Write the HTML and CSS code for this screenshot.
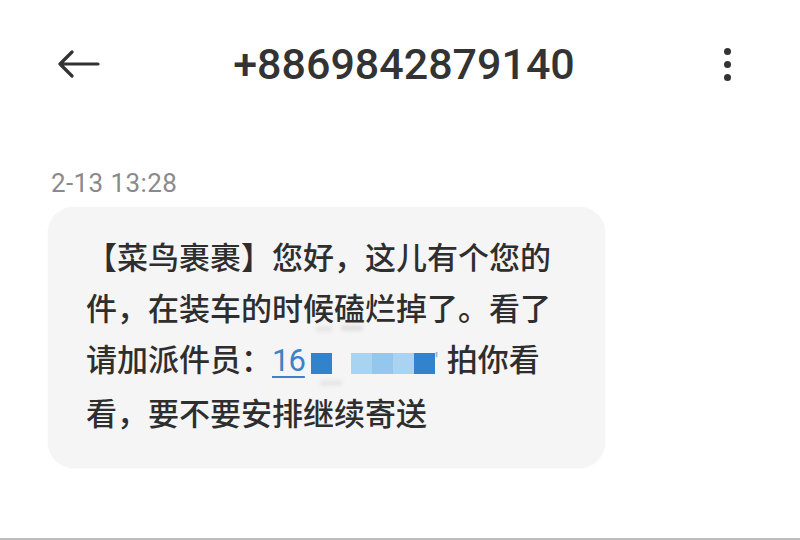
FILE: index.html
```html
<!DOCTYPE html>
<html lang="zh-CN">
<head>
    <meta charset="UTF-8">
    <meta name="viewport" content="width=device-width, initial-scale=1.0">
    <title>+8869842879140</title>
    <link rel="stylesheet" href="styles.css">
</head>
<body>
    <div class="screen">
        <header class="top-bar">
            <div class="back">
                <svg width="44" height="28" viewBox="0 0 44 28">
                    <path d="M3 14 H41 M15 2 L3 14 L15 26" fill="none" stroke="#333" stroke-width="3.2" stroke-linecap="round" stroke-linejoin="round"/>
                </svg>
            </div>
            <h1 class="number">+8869842879140</h1>
            <div class="more">
                <span class="dot"></span>
                <span class="dot"></span>
                <span class="dot"></span>
            </div>
        </header>

        <div class="thread">
            <div class="time">2-13 13:28</div>
            <div class="bubble">
                <p class="msg">【菜鸟裹裹】您好，这儿有个您的<br>件，在装车的时候磕烂掉了。看了<br>请加派件员：<a class="phone" href="#">16</a><span class="mosaic"><span class="blk dark"></span><span class="blk gap"></span><span class="blk light"></span><span class="blk lighter"></span><span class="blk light"></span><span class="blk dark"></span><span class="tick">'</span></span>拍你看<br>看，要不要安排继续寄送</p>
                <span class="smudge s1"></span>
                <span class="smudge s2"></span>
                <span class="smudge s3"></span>
            </div>
        </div>

        <div class="bottom-line"></div>
    </div>
</body>
</html>
```

FILE: styles.css
```css
body {
    margin: 0;
    background-color: #ffffff;
    font-family: Roboto, "Noto Sans CJK SC", sans-serif;
}
.screen {
    height: 540px;
    display: flex;
    flex-direction: column;
}

.top-bar {
    height: 128px;
    display: grid;
    grid-template-columns: 1fr auto 1fr;
    align-items: center;
    padding: 0 57px;
}
.top-bar .back {
    display: flex;
    align-items: center;
}
.top-bar .number {
    margin: 0;
    padding-left: 8px;
    font-family: Roboto, sans-serif;
    font-size: 43px;
    font-weight: 500;
    color: #333333;
}
.top-bar .more {
    justify-self: end;
    display: flex;
    flex-direction: column;
    gap: 6px;
    padding-right: 12px;
}
.top-bar .dot {
    width: 7px;
    height: 7px;
    border-radius: 50%;
    background-color: #333333;
}

.thread {
    padding: 0 48px;
    margin-top: 40px;
}
.thread .time {
    font-family: Roboto, sans-serif;
    font-size: 26px;
    line-height: 31px;
    letter-spacing: 0.4px;
    color: #8a8a8a;
    padding-left: 3px;
}
.bubble {
    position: relative;
    width: 557px;
    box-sizing: border-box;
    margin-top: 8px;
    padding: 23px 30px 31px 38px;
    background-color: #f5f5f5;
    border-radius: 26px;
    box-shadow: 0 0 2px rgba(0, 0, 0, 0.06);
}
.bubble .msg {
    margin: 0;
    font-family: "Noto Sans CJK SC", sans-serif;
    font-size: 31px;
    font-weight: 500;
    line-height: 51px;
    color: #2e2e2e;
    white-space: nowrap;
}
.bubble .phone {
    font-family: Roboto, sans-serif;
    color: #3b82c8;
    text-decoration: underline;
    text-decoration-thickness: 2px;
    text-underline-offset: 5px;
    font-weight: 400;
    letter-spacing: -1px;
}
.bubble .mosaic {
    display: inline-flex;
    align-items: center;
    vertical-align: -3px;
    height: 22px;
    margin-left: 6px;
}
.mosaic .blk {
    width: 21px;
    height: 21px;
}
.mosaic .dark {
    background-color: #3282cc;
}
.mosaic .gap {
    width: 19px;
    background-color: transparent;
}
.mosaic .light {
    background-color: #a8d4f2;
}
.mosaic .lighter {
    background-color: #93c7ec;
}
.mosaic .blk.dark:last-of-type {
    margin-left: 2px;
}
.mosaic .tick {
    font-family: Roboto, sans-serif;
    font-size: 20px;
    color: #9ab8d8;
    width: 12px;
    align-self: flex-start;
    line-height: 14px;
}

.smudge {
    position: absolute;
    height: 4px;
    border-radius: 2px;
    background-color: #e0e0e0;
    filter: blur(2px);
}
.smudge.s1 {
    left: 267px;
    top: 120px;
    width: 18px;
}
.smudge.s2 {
    left: 293px;
    top: 119px;
    width: 22px;
    background-color: #d6d6d6;
}
.smudge.s3 {
    left: 272px;
    top: 174px;
    width: 22px;
}

.bottom-line {
    margin-top: auto;
    height: 2px;
    background-color: #bdbdbd;
}
```
